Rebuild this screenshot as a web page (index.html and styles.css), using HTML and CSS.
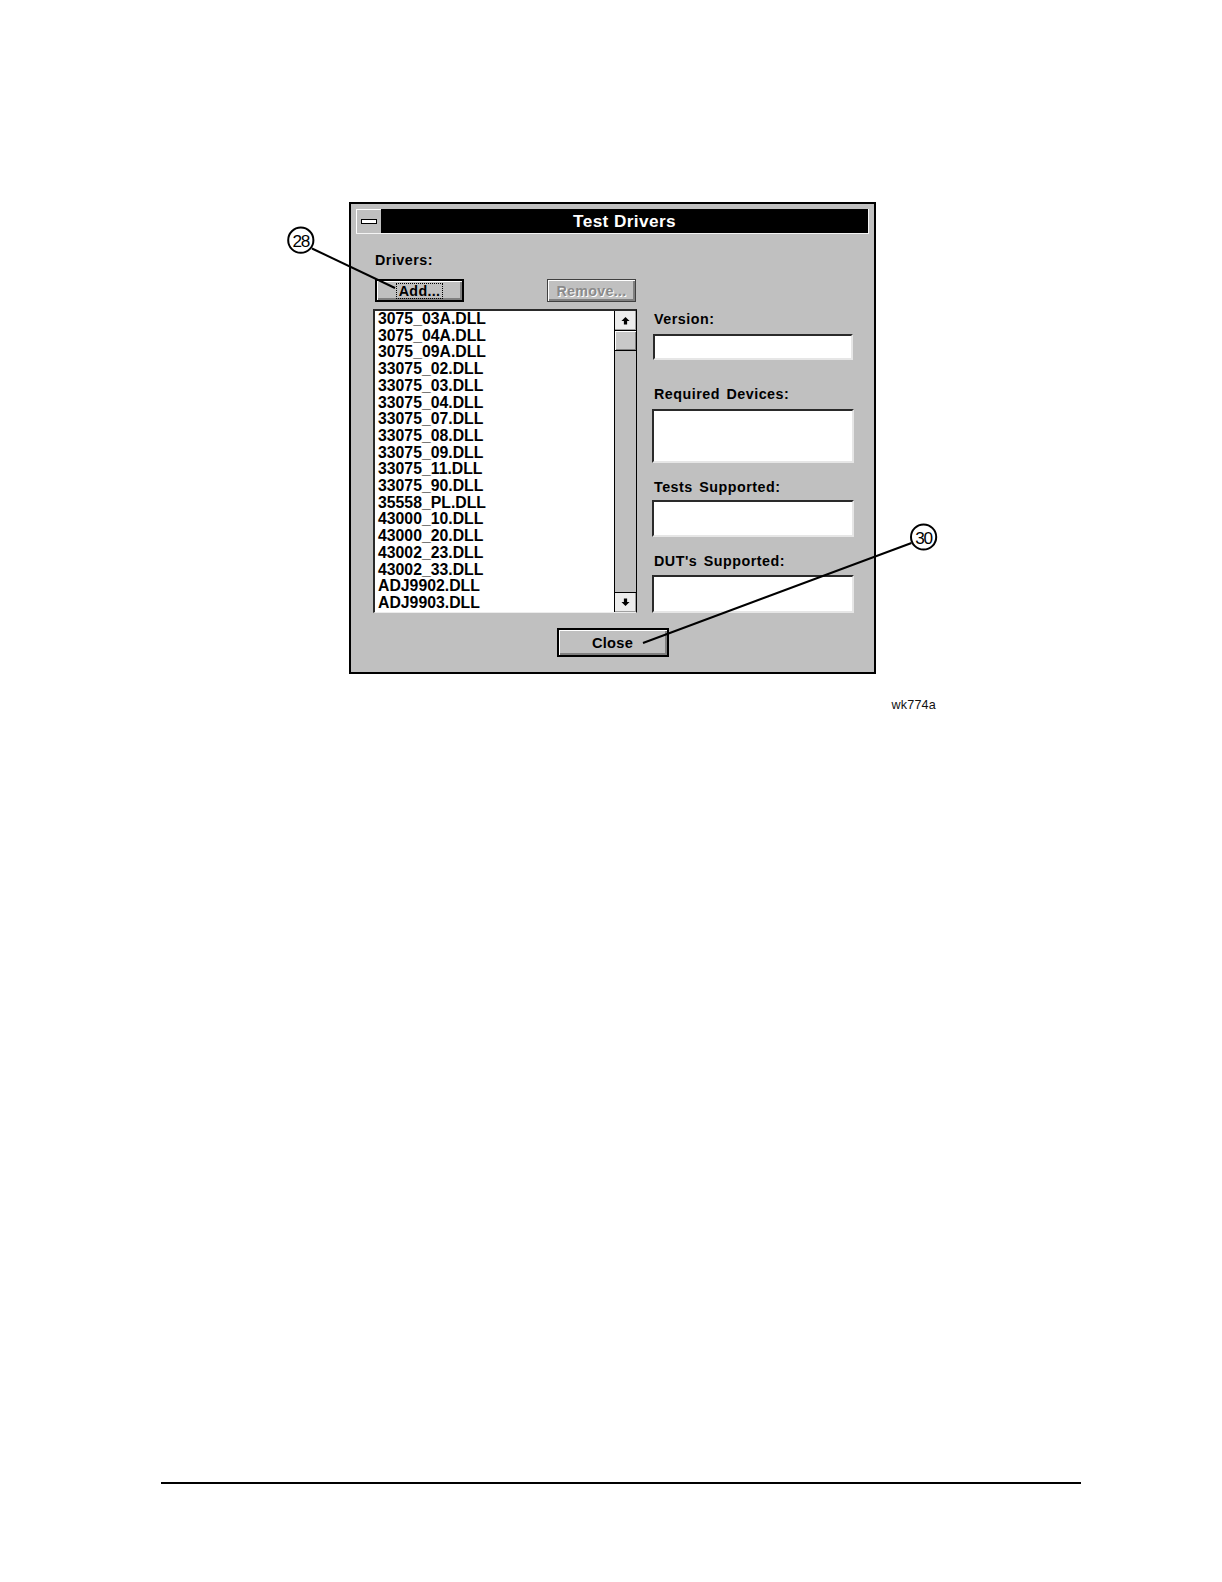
FILE: index.html
```html
<!DOCTYPE html>
<html>
<head>
<meta charset="utf-8">
<title>Test Drivers</title>
<link rel="stylesheet" href="styles.css">
</head>
<body>
<div class="sheet">
  <div class="figure">
    <div class="window">
      <div class="titlebar">
        <div class="sysbox"><span class="sysbar"></span></div>
        <div class="title">Test Drivers</div>
      </div>
      <div class="content">
        <div class="leftcol">
          <div class="lbl lbl-drivers">Drivers:</div>
          <div class="btnrow">
            <div class="btn btn-default btn-add"><span class="focus">Add...</span></div>
            <div class="btn btn-disabled btn-remove">Remove...</div>
          </div>
          <div class="listbox">
            <div class="items">
              <div>3075_03A.DLL</div>
              <div>3075_04A.DLL</div>
              <div>3075_09A.DLL</div>
              <div>33075_02.DLL</div>
              <div>33075_03.DLL</div>
              <div>33075_04.DLL</div>
              <div>33075_07.DLL</div>
              <div>33075_08.DLL</div>
              <div>33075_09.DLL</div>
              <div>33075_11.DLL</div>
              <div>33075_90.DLL</div>
              <div>35558_PL.DLL</div>
              <div>43000_10.DLL</div>
              <div>43000_20.DLL</div>
              <div>43002_23.DLL</div>
              <div>43002_33.DLL</div>
              <div>ADJ9902.DLL</div>
              <div>ADJ9903.DLL</div>
            </div>
            <div class="scrollbar">
              <div class="sbtn"><svg width="9" height="9" viewBox="0 0 10 10"><path d="M5 1 L9.5 5.5 H6.8 V9.5 H3.2 V5.5 H0.5 Z" fill="#000"/></svg></div>
              <div class="thumb"></div>
              <div class="track"></div>
              <div class="sbtn sbtn-down"><svg width="9" height="9" viewBox="0 0 10 10"><path d="M5 9 L9.5 4.5 H6.8 V0.5 H3.2 V4.5 H0.5 Z" fill="#000"/></svg></div>
            </div>
          </div>
        </div>
        <div class="rightcol">
          <div class="lbl lbl-version">Version:</div>
          <div class="field field-version"></div>
          <div class="lbl lbl-req">Required Devices:</div>
          <div class="field field-req"></div>
          <div class="lbl lbl-tests">Tests Supported:</div>
          <div class="field field-tests"></div>
          <div class="lbl lbl-dut">DUT's Supported:</div>
          <div class="field field-dut"></div>
        </div>
      </div>
      <div class="closerow">
        <div class="btn btn-default btn-close">Close</div>
      </div>
    </div>
    <div class="figid">wk774a</div>
  </div>
</div>
<div class="rule"></div>

<svg class="callouts" width="1222" height="760" viewBox="0 0 1222 760">
  <line x1="312" y1="248.5" x2="395" y2="288" stroke="#000" stroke-width="2"/>
  <circle cx="300.8" cy="240.2" r="12.6" fill="#fff" stroke="#000" stroke-width="2"/>
  <text x="300.8" y="246.8" text-anchor="middle" class="ctext">28</text>
  <line x1="911.5" y1="543" x2="643" y2="643" stroke="#000" stroke-width="2"/>
  <circle cx="923.6" cy="537" r="12.6" fill="#fff" stroke="#000" stroke-width="2"/>
  <text x="923.6" y="543.6" text-anchor="middle" class="ctext">30</text>
</svg>
</body>
</html>
```
FILE: styles.css
```css
html, body {
  margin: 0;
  padding: 0;
  background: #fff;
}
body {
  position: relative;
  width: 1222px;
  height: 1582px;
  font-family: "Liberation Sans", Arial, sans-serif;
  color: #000;
}
.sheet {
  height: 1482px;
}
.figure {
  padding-top: 202px;
  padding-left: 349px;
  width: 587px;
}
.window {
  box-sizing: border-box;
  width: 527px;
  height: 472px;
  border: 2px solid #000;
  padding: 5px;
  background: #c0c0c0;
}
.titlebar {
  display: flex;
  height: 24px;
  border-right: 1px solid #f4f4f4;
  border-bottom: 1px solid #f4f4f4;
}
.sysbox {
  box-sizing: border-box;
  width: 25px;
  background: #c0c0c0;
  border-left: 1px solid #fff;
  border-top: 1px solid #fff;
  display: flex;
  align-items: center;
  justify-content: center;
}
.sysbar {
  box-sizing: border-box;
  width: 16px;
  height: 5px;
  border: 1px solid #000;
  background: #fff;
}
.title {
  flex: 1;
  background: #000;
  color: #fff;
  font-weight: bold;
  font-size: 17.2px;
  letter-spacing: 0.4px;
  line-height: 24px;
  text-align: center;
}
.content {
  display: flex;
  padding-left: 17px;
}
.leftcol {
  width: 264px;
}
.lbl {
  font-size: 14.3px;
  font-weight: bold;
  line-height: 16px;
  letter-spacing: 0.5px;
  word-spacing: 2px;
  margin-left: 2px;
  white-space: nowrap;
}
.lbl-drivers {
  margin-top: 18px;
}
.btnrow {
  display: flex;
  margin-top: 11px;
  height: 23px;
}
.btn {
  box-sizing: border-box;
  background: #c0c0c0;
  font-size: 14.3px;
  font-weight: bold;
  display: flex;
  align-items: center;
  justify-content: center;
  letter-spacing: 0.3px;
}
.btn-default {
  border: 2px solid #000;
  box-shadow: inset 1px 1px 0 #fff, inset -2px -2px 0 #808080;
}
.btn-add {
  margin-left: 2px;
  width: 89px;
  height: 23px;
}
.focus {
  border: 1px dotted #000;
  padding: 0 2px;
  line-height: 14px;
}
.btn-disabled {
  border: 1px solid #404040;
  box-shadow: inset 1px 1px 0 #fff, inset -2px -2px 0 #808080;
  color: #8a8a8a;
  text-shadow: 1px 1px 0 #fff;
}
.btn-remove {
  margin-left: 83px;
  width: 89px;
  height: 23px;
}
.listbox {
  box-sizing: border-box;
  margin-top: 7px;
  height: 304px;
  display: flex;
  background: #fff;
  border-top: 2px solid #2a2a2a;
  border-left: 2px solid #2a2a2a;
  border-bottom: 1px solid #ececec;
  border-right: 1px solid #000;
}
.items {
  flex: 1;
  padding-left: 3px;
  font-size: 15.8px;
  font-weight: bold;
  line-height: 16.7px;
  overflow: hidden;
  white-space: nowrap;
}
.scrollbar {
  width: 21px;
  border-left: 1px solid #000;
  display: flex;
  flex-direction: column;
  background: #c0c0c0;
}
.sbtn {
  box-sizing: border-box;
  height: 20px;
  background: #ececec;
  border-bottom: 1px solid #000;
  display: flex;
  align-items: center;
  justify-content: center;
  box-shadow: inset -1px -1px 0 #a0a0a0;
}
.sbtn-down {
  border-bottom: none;
  border-top: 1px solid #000;
}
.thumb {
  box-sizing: border-box;
  height: 20px;
  background: #c8c8c8;
  border-bottom: 1px solid #000;
  box-shadow: inset 1px 1px 0 #fff, inset -1px -1px 0 #808080;
}
.track {
  flex: 1;
  background: #c0c0c0;
}
.rightcol {
  margin-left: 15px;
  width: 202px;
  display: flex;
  flex-direction: column;
}
.field {
  box-sizing: border-box;
  background: #fff;
  border-top: 2px solid #2a2a2a;
  border-left: 2px solid #2a2a2a;
  border-bottom: 2px solid #e6e6e6;
  border-right: 2px solid #e6e6e6;
}
.lbl-version {
  margin-top: 77px;
}
.field-version {
  margin-top: 7px;
  margin-left: 1px;
  width: 200px;
  height: 26px;
}
.lbl-req {
  margin-top: 26px;
}
.field-req {
  margin-top: 7px;
  width: 202px;
  height: 54px;
}
.lbl-tests {
  margin-top: 16px;
}
.field-tests {
  margin-top: 5px;
  width: 202px;
  height: 37px;
}
.lbl-dut {
  margin-top: 16px;
}
.field-dut {
  margin-top: 6px;
  width: 202px;
  height: 38px;
}
.closerow {
  display: flex;
  justify-content: center;
  margin-top: 15px;
}
.btn-close {
  width: 112px;
  height: 29px;
  font-size: 14.6px;
}
.figid {
  margin-top: 24px;
  text-align: right;
  font-size: 12.6px;
  line-height: 14px;
  color: #111;
  letter-spacing: 0.2px;
}
.rule {
  margin-left: 161px;
  width: 920px;
  height: 2px;
  background: #000;
}
.callouts {
  position: absolute;
  left: 0;
  top: 0;
  pointer-events: none;
}
.ctext {
  font-family: "Liberation Sans", Arial, sans-serif;
  font-size: 17.2px;
  letter-spacing: -1.2px;
  fill: #000;
}
```
